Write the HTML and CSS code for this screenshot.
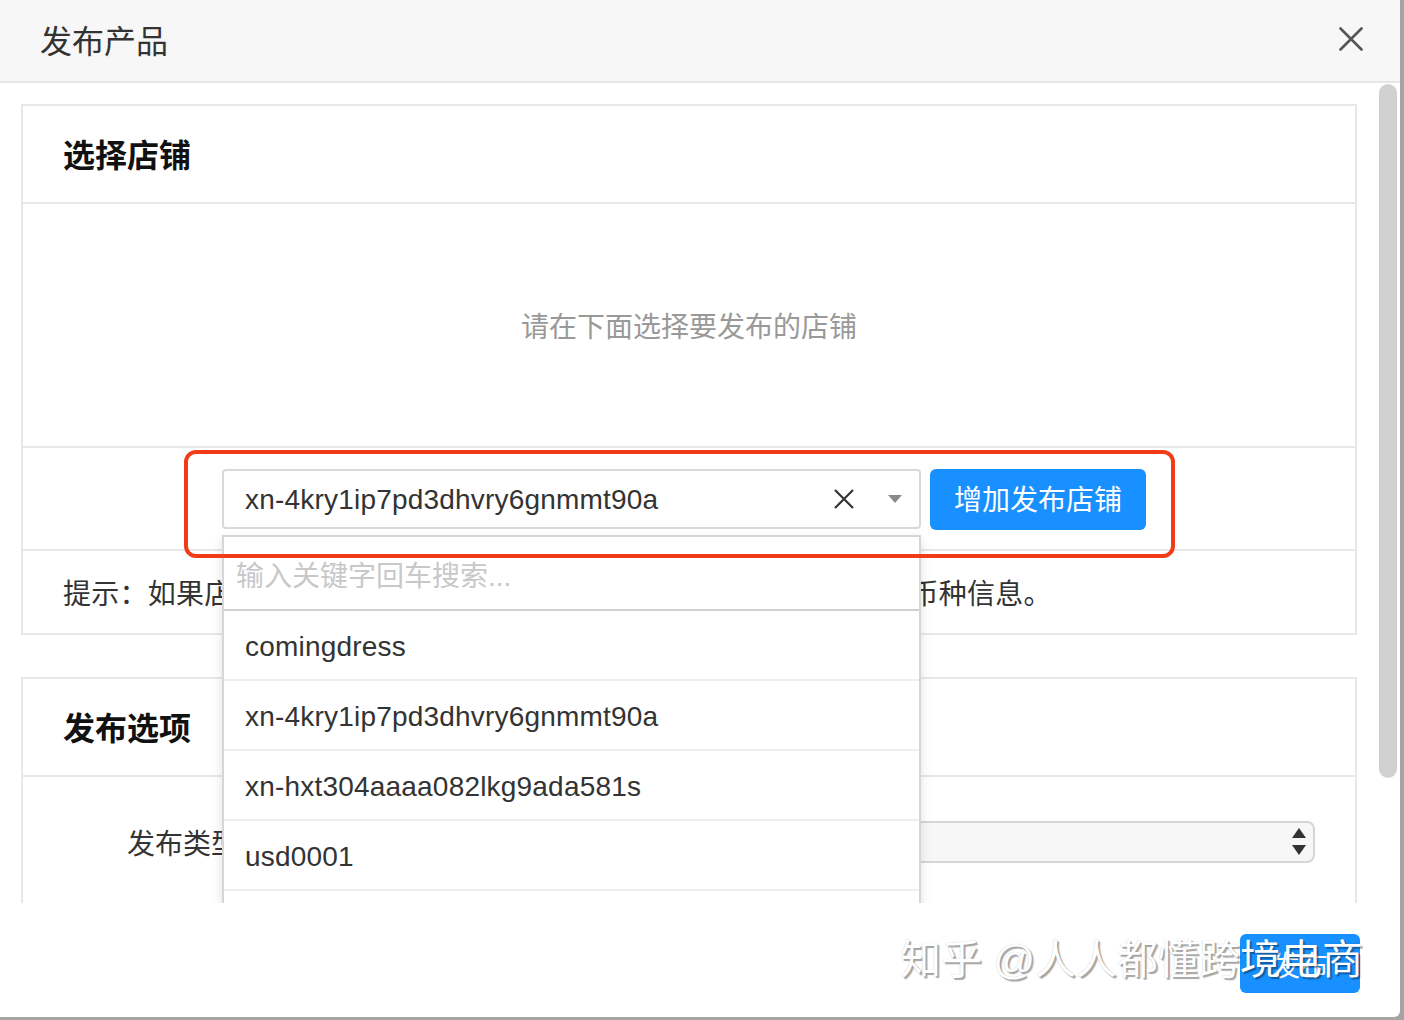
FILE: index.html
```html
<!DOCTYPE html>
<html lang="zh-CN">
<head>
<meta charset="utf-8">
<title>发布产品</title>
<link rel="stylesheet" href="styles.css">
</head>
<body>
<div class="modal">
  <div class="modal-header">
    <h1 class="modal-title">发布产品</h1>
    <button class="close-btn" aria-label="关闭">
      <svg width="24" height="24" viewBox="0 0 24 24"><path d="M1.5 1.5 L22.5 22.5 M22.5 1.5 L1.5 22.5" stroke="#555" stroke-width="2.6" stroke-linecap="round" fill="none"/></svg>
    </button>
  </div>
  <div class="modal-body">
    <div class="body-content">
      <section class="panel">
        <div class="panel-heading">选择店铺</div>
        <div class="panel-empty">请在下面选择要发布的店铺</div>
        <div class="shop-row">
          <div class="shop-select">
            <div class="select-box">
              <span class="select-value">xn-4kry1ip7pd3dhvry6gnmmt90a</span>
              <svg class="clear-icon" width="20" height="20" viewBox="0 0 20 20"><path d="M1 1 L19 19 M19 1 L1 19" stroke="#333" stroke-width="2.2" fill="none"/></svg>
              <svg class="caret-icon" width="14" height="8" viewBox="0 0 14 8"><path d="M0 0 H14 L7 8 Z" fill="#8a8a8a"/></svg>
            </div>
            <div class="dropdown">
              <div class="dropdown-search">输入关键字回车搜索...</div>
              <ul class="dropdown-list">
                <li>comingdress</li>
                <li>xn-4kry1ip7pd3dhvry6gnmmt90a</li>
                <li>xn-hxt304aaaa082lkg9ada581s</li>
                <li>usd0001</li>
                <li>usd0002</li>
              </ul>
            </div>
          </div>
          <button class="btn-primary btn-add">增加发布店铺</button>
          <div class="highlight"></div>
        </div>
        <div class="panel-hint">提示：如果店铺不在下拉列表中，请先到店铺管理页面完善该店铺的币种信息。</div>
      </section>
      <section class="panel">
        <div class="panel-heading">发布选项</div>
        <div class="form-row">
          <label class="form-label">发布类型</label>
          <div class="native-select">
            <svg width="14" height="28" viewBox="0 0 14 28"><path d="M7 0 L14 10 H0 Z M0 17 H14 L7 27 Z" fill="#333"/></svg>
          </div>
        </div>
      </section>
    </div>
    <div class="scroll-track"><div class="scroll-thumb"></div></div>
  </div>
  <div class="modal-footer">
    <button class="btn-primary btn-submit">发布</button>
    <div class="watermark">知乎 @人人都懂跨境电商</div>
  </div>
</div>
</body>
</html>
```
FILE: styles.css
```css
* { box-sizing: border-box; }
html, body { margin: 0; padding: 0; }
body {
  width: 1404px;
  height: 1020px;
  overflow: hidden;
  background: #a4a4a4;
  font-family: "Liberation Sans", "Noto Sans CJK SC", sans-serif;
  color: #333;
}
.modal {
  width: 1400px;
  height: 1017px;
  background: #fff;
  border-bottom-right-radius: 6px;
  display: flex;
  flex-direction: column;
  overflow: hidden;
}
.modal-header {
  height: 83px;
  flex: none;
  background: #f7f7f7;
  border-bottom: 2px solid #e6e6e6;
  display: flex;
  align-items: center;
  justify-content: space-between;
  padding: 0 37px 3px 40px;
}
.modal-title {
  margin: 0;
  font-size: 32px;
  font-weight: normal;
  color: #333;
  font-family: "Noto Sans CJK SC", sans-serif;
}
.close-btn {
  border: 0;
  background: none;
  padding: 0;
  width: 24px;
  height: 24px;
  display: flex;
}
.modal-body {
  height: 820px;
  flex: none;
  display: flex;
  overflow: hidden;
}
.body-content {
  flex: 1;
  min-width: 0;
  padding: 21px;
}
.scroll-track {
  width: 22px;
  flex: none;
  padding: 1px 3px 0 1px;
}
.scroll-thumb {
  height: 694px;
  background: #d1d1d1;
  border-radius: 10px;
}
.panel {
  border: 2px solid #e8e8e8;
}
.panel + .panel { margin-top: 42px; }
.panel-heading {
  height: 98px;
  border-bottom: 2px solid #e8e8e8;
  padding: 0 0 3px 40px;
  display: flex;
  align-items: center;
  font-size: 32px;
  font-weight: bold;
  color: #111;
}
.panel-empty {
  height: 244px;
  border-bottom: 2px solid #e8e8e8;
  display: flex;
  align-items: center;
  justify-content: center;
  font-size: 28px;
  color: #999;
}
.shop-row {
  position: relative;
  height: 103px;
  border-bottom: 2px solid #e8e8e8;
  display: flex;
  align-items: flex-start;
  gap: 9px;
  padding: 21px 0 0 199px;
}
.shop-select {
  position: relative;
  width: 699px;
}
.select-box {
  height: 60px;
  border: 2px solid #d9d9d9;
  border-radius: 4px;
  display: flex;
  align-items: center;
  padding: 0 17px 0 21px;
  background: #fff;
}
.select-value {
  flex: 1;
  font-size: 28px;
  letter-spacing: 0.2px;
  padding-top: 2px;
  color: #333;
}
.caret-icon { margin-left: 34px; }
.dropdown {
  position: absolute;
  z-index: 10;
  top: 66px;
  left: 0;
  width: 699px;
  background: #fff;
  border: 2px solid #d6d6d6;
  box-shadow: 0 4px 10px rgba(0, 0, 0, 0.12);
}
.dropdown-search {
  height: 74px;
  border-bottom: 2px solid #cfcfcf;
  display: flex;
  align-items: center;
  padding: 2px 0 0 12px;
  font-size: 28px;
  color: #c8c8c8;
}
.dropdown-list {
  list-style: none;
  margin: 0;
  padding: 0;
}
.dropdown-list li {
  height: 70px;
  border-bottom: 2px solid #eee;
  display: flex;
  align-items: center;
  padding: 3px 0 0 21px;
  font-size: 28px;
  letter-spacing: 0.2px;
  color: #333;
}
.btn-primary {
  border: 0;
  background: #1890ff;
  color: #fff;
  font-family: "Noto Sans CJK SC", sans-serif;
  font-size: 28px;
  border-radius: 6px;
  padding: 0;
}
.btn-add {
  width: 216px;
  height: 61px;
  padding-bottom: 3px;
}
.highlight {
  position: absolute;
  z-index: 20;
  left: 161px;
  top: 2px;
  width: 991px;
  height: 108px;
  border: 4px solid #f23b18;
  border-radius: 12px;
}
.panel-hint {
  height: 82px;
  display: flex;
  align-items: center;
  padding-left: 40px;
  font-size: 28px;
  letter-spacing: 0.25px;
  color: #333;
}
.form-row {
  display: flex;
  align-items: center;
  padding: 44px 40px 60px 0;
}
.form-label {
  width: 216px;
  text-align: right;
  margin-right: 21px;
  font-size: 28px;
  color: #333;
}
.native-select {
  flex: 1;
  height: 42px;
  background: #f7f7f7;
  border: 2px solid #d6d6d6;
  border-radius: 8px;
  display: flex;
  align-items: center;
  justify-content: flex-end;
  padding-right: 7px;
}
.modal-footer {
  flex: 1;
  position: relative;
  display: flex;
  justify-content: flex-end;
  align-items: flex-start;
  padding: 31px 40px 0 0;
}
.btn-submit {
  width: 120px;
  height: 59px;
}
.watermark {
  position: absolute;
  z-index: 5;
  left: 900px;
  top: 37px;
  font-size: 41px;
  line-height: 1;
  white-space: nowrap;
  color: #fff;
  text-shadow: 2px 2px 1px rgba(0, 0, 0, 0.35), 0 0 1px rgba(0, 0, 0, 0.25);
}
```
